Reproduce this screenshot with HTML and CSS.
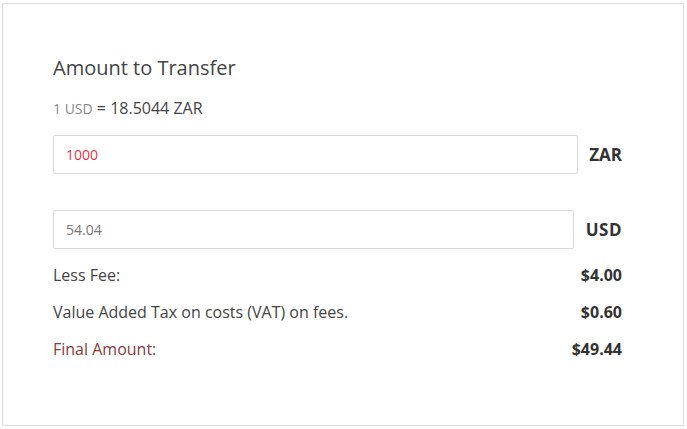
FILE: index.html
```html
<!DOCTYPE html>
<html>
<head>
<meta charset="utf-8">
<link rel="stylesheet" href="styles.css">
</head>
<body>
<div class="card">
  <h2 class="title">Amount to Transfer</h2>
  <div class="rate"><span class="rate-base">1 USD</span> = 18.5044 ZAR</div>
  <div class="field-row">
    <div class="input input-zar">1000</div>
    <div class="cur">ZAR</div>
  </div>
  <div class="spacer"></div>
  <div class="field-row second">
    <div class="input input-usd">54.04</div>
    <div class="cur cur-usd">USD</div>
  </div>
  <div class="line first"><span class="lbl">Less Fee:</span><span class="val">$4.00</span></div>
  <div class="line"><span class="lbl">Value Added Tax on costs (VAT) on fees.</span><span class="val">$0.60</span></div>
  <div class="line"><span class="lbl final">Final Amount:</span><span class="val">$49.44</span></div>
</div>
</body>
</html>
```
FILE: styles.css
```css
* { box-sizing: border-box; }
body {
  margin: 0;
  background: #fff;
  font-family: "Open Sans", "Liberation Sans", sans-serif;
  color: #444;
}
.card {
  margin: 3px 0 0 2px;
  width: 682px;
  height: 423px;
  border: 1px solid #ddd;
  padding: 52px 61px 0 50px;
}
.title {
  margin: 0;
  font-size: 20px;
  font-weight: 400;
  line-height: 24px;
  color: #444;
}
.rate {
  margin-top: 18px;
  font-size: 16px;
  line-height: 20px;
}
.rate-base {
  font-size: 14px;
  color: #888;
}
.field-row {
  display: flex;
  align-items: center;
  margin-top: 16px;
}
.spacer { height: 36px; }
.field-row.second { margin-top: 0; }
.input {
  flex: 1;
  height: 39px;
  border: 1px solid #d9d9d9;
  border-radius: 2px;
  padding: 0 12px;
  display: flex;
  align-items: center;
  font-size: 14px;
}
.input-zar { color: #e8334a; }
.input-usd { color: #777; }
.cur {
  padding-left: 11px;
  font-size: 17px;
  font-weight: 700;
  color: #333;
}
.cur-usd { padding-left: 12px; letter-spacing: 0.5px; }
.line {
  display: flex;
  justify-content: space-between;
  font-size: 16px;
  line-height: 20px;
  margin-top: 17px;
}
.line.first { margin-top: 16px; }
.final { color: #8b3a3a; }
.val { font-weight: 700; color: #333; }
```
